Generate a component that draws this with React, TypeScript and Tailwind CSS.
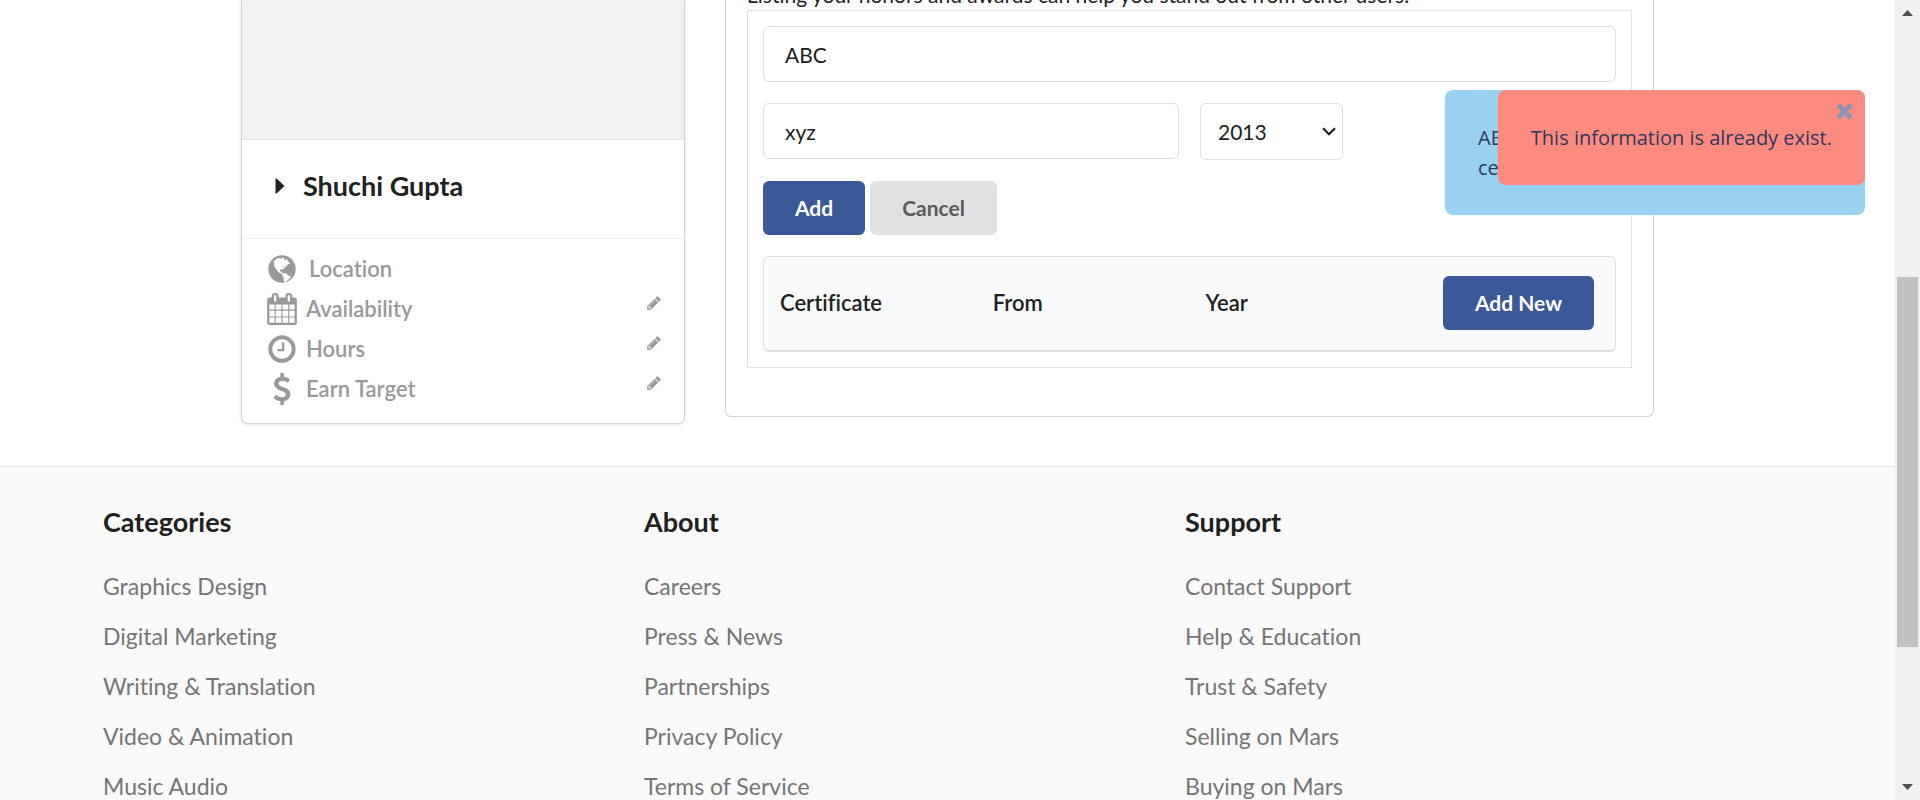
import React from "react";

const PENCIL =
  "M491 1536l91-91-235-235-91 91v107h128v128h107zm523-928q0-22-22-22-10 0-17 7l-542 542q-7 7-7 17 0 22 22 22 10 0 17-7l542-542q7-7 7-17zm-54-192l416 416-832 832h-416v-416zm683 96q0 53-37 90l-166 166-416-416 166-165q36-38 90-38 53 0 91 38l235 234q37 39 37 91z";
const CALENDAR =
  "M192 1664h288v-288h-288v288zm352 0h320v-288h-320v288zm-352-352h288v-320h-288v320zm352 0h320v-320h-320v320zm-352-384h288v-288h-288v288zm736 736h320v-288h-320v288zm-384-736h320v-288h-320v288zm768 736h288v-288h-288v288zm-384-352h320v-320h-320v320zm-352-864v-288q0-13-9.5-22.5t-22.5-9.5h-64q-13 0-22.5 9.5t-9.5 22.5v288q0 13 9.5 22.5t22.5 9.5h64q13 0 22.5-9.5t9.5-22.5zm736 864h288v-320h-288v320zm-384-384h320v-288h-320v288zm384 0h288v-288h-288v288zm32-480v-288q0-13-9.5-22.5t-22.5-9.5h-64q-13 0-22.5 9.5t-9.5 22.5v288q0 13 9.5 22.5t22.5 9.5h64q13 0 22.5-9.5t9.5-22.5zm384-64v1280q0 52-38 90t-90 38h-1408q-52 0-90-38t-38-90v-1280q0-52 38-90t90-38h128v-96q0-66 47-113t113-47h64q66 0 113 47t47 113v96h384v-96q0-66 47-113t113-47h64q66 0 113 47t47 113v96h128q52 0 90 38t38 90z";
const CLOCK =
  "M1024 544v448q0 14-9 23t-23 9h-320q-14 0-23-9t-9-23v-64q0-14 9-23t23-9h224v-352q0-14 9-23t23-9h64q14 0 23 9t9 23zm416 352q0-148-73-273t-198-198-273-73-273 73-198 198-73 273 73 273 198 198 273 73 273-73 198-198 73-273zm224 0q0 209-103 385.5t-279.5 279.5-385.5 103-385.5-103-279.5-279.5-103-385.5 103-385.5 279.5-279.5 385.5-103 385.5 103 279.5 279.5 103 385.5z";
const DOLLAR =
  "M1362 1185q0 153-99.5 263.5t-258.5 136.5v175q0 14-9 23t-23 9h-135q-13 0-22.5-9.5t-9.5-22.5v-175q-66-9-127.5-31t-101.5-44.5-74-48-46.5-37.5-17.5-18q-17-21-2-41l103-135q7-10 23-12 15-2 24 9l2 2q113 99 243 125 37 8 74 8 81 0 142.5-43t61.5-122q0-28-15-53t-33.5-42-58.5-37.5-66-32-80-32.5q-39-16-61.5-25t-61.5-26.5-62.5-31-56.5-35.5-53.5-42.5-43.5-49-35.5-58-21-66.5-8.5-78q0-138 98-242t255-134v-180q0-13 9.5-22.5t22.5-9.5h135q14 0 23 9t9 23v176q57 6 110.5 23t87 33.5 63.5 37.5 39 29 15 14q17 18 5 38l-81 146q-8 15-23 16-14 3-27-7-3-3-14.5-12t-39-26.5-58.5-32-74.5-26-85.5-11.5q-95 0-155 43t-60 111q0 26 8.5 48t29.5 41.5 39.5 33 56 31 60.5 27 70 27.5q53 20 81 31.5t76 35 75.5 42.5 62 50 53 63.5 31.5 76.5 13 94z";

function Glyph({ d, className }: { d: string; className: string }) {
  return (
    <svg viewBox="0 0 1792 1792" fill="currentColor" className={className} aria-hidden="true">
      <path d={d} />
    </svg>
  );
}

function Globe() {
  return (
    <svg viewBox="0 0 32 32" className="size-8" aria-hidden="true">
      <circle cx="16" cy="16" r="13.700" fill="currentColor" />
      <path
        fill="#fff"
        d="M7.500 8.700 10.500 5.800l2.800-1 1.600 1 1.900-1.200 1.600.6-1 1.300 1.900.4 1.100-1 1.200 1.600 1.600 2.100 1.200.8-2.400.8-1.300 1.800-2.200 1.400-1.200 2-1.500-.4-1.800 1 .2 1.700 1.600-.4.2 1.500 1.700.9-.4 1.200-2.400-1.300-2.600-1.600-2.300-2.800-1.900-3.200-.2-3.200z"
      />
      <path
        fill="#fff"
        d="m16.900 20.600 2.200-.5 2 .9 1.100 1.400 2.700.8-.8 2.200-1.900 1.100-1.600 1.800-2 .9-.9-1.800-.2-2.600-1.300-1.700z"
      />
    </svg>
  );
}

const details = [
  { label: "Availability", d: CALENDAR },
  { label: "Hours", d: CLOCK },
  { label: "Earn Target", d: DOLLAR },
];

const footer = [
  {
    title: "Categories",
    links: ["Graphics Design", "Digital Marketing", "Writing & Translation", "Video & Animation", "Music Audio"],
  },
  { title: "About", links: ["Careers", "Press & News", "Partnerships", "Privacy Policy", "Terms of Service"] },
  {
    title: "Support",
    links: ["Contact Support", "Help & Education", "Trust & Safety", "Selling on Mars", "Buying on Mars"],
  },
];

function ProfileCard() {
  return (
    <aside className="w-[442px] shrink-0 overflow-hidden rounded-b-md bg-white shadow-[0_0_0_1px_#d4d4d5,0_1px_4px_0_#d4d4d5]">
      <div className="h-[140px] border-b border-[#e6e6e6] bg-[#f1f1f1]" />
      <div className="flex h-[98px] items-center pb-1.5 pl-[33px]">
        <svg viewBox="0 0 10 16" className="mr-[18px] h-4 w-[10px]" fill="#212121" aria-hidden="true">
          <path d="M0.500 0.500h1l8 7.500-8 7.500h-1z" />
        </svg>
        <h2 className="text-[27px] leading-8 font-bold">Shuchi Gupta</h2>
      </div>
      <ul className="border-t border-[#f0f0f0] pt-[10px] pr-[22px] pb-[14px] pl-6 text-[22px] font-semibold text-[#999]">
        <li className="flex h-10 items-center">
          <Globe />
          <span className="ml-[11px] pb-0.5">Location</span>
        </li>
        {details.map((item) => (
          <li key={item.label} className="flex h-10 items-center">
            <Glyph d={item.d} className="size-8" />
            <span className="ml-2 pb-0.5">{item.label}</span>
            <button type="button" aria-label={`Edit ${item.label}`} className="ml-auto pb-3">
              <Glyph d={PENCIL} className="size-4" />
            </button>
          </li>
        ))}
      </ul>
    </aside>
  );
}

function Certifications() {
  const field = "rounded-md border border-[#dededf] bg-white text-[21px] text-[#212121] outline-none";
  const primary = "h-[54px] rounded-md bg-[#3b5998] px-8 text-[21px] font-bold text-white";
  return (
    <section className="flex-1 rounded-b-md border border-t-0 border-[#d4d4d5] px-[21px] pb-12">
      <p className="-mt-5 text-[21px] leading-[30px]">
        Listing your honors and awards can help you stand out from other users.
      </p>
      <form className="border border-[#e2e2e3] p-[15px]" onSubmit={(e) => e.preventDefault()}>
        <input aria-label="Certificate or award" defaultValue="ABC" className={`${field} h-14 w-full px-[21px]`} />
        <div className="mt-[21px] flex gap-[21px]">
          <input aria-label="Certified from" defaultValue="xyz" className={`${field} h-14 w-[416px] px-[21px]`} />
          <div className="relative">
            <select aria-label="Year" defaultValue="2013" className={`${field} h-[57px] w-[143px] appearance-none px-[17px]`}>
              <option>2013</option>
              <option>2014</option>
              <option>2015</option>
            </select>
            <svg
              viewBox="0 0 14 9"
              className="pointer-events-none absolute top-6 right-[7px] h-[9px] w-[14px]"
              fill="none"
              stroke="#212121"
              strokeWidth="2.200"
              aria-hidden="true"
            >
              <path d="M1 1.200l6 6 6-6" />
            </svg>
          </div>
        </div>
        <div className="mt-[21px] flex gap-[5px]">
          <button type="submit" className={primary}>
            Add
          </button>
          <button type="button" className="h-[54px] rounded-md bg-[#e0e1e2] px-8 text-[21px] font-bold text-[#5a5a5a]">
            Cancel
          </button>
        </div>
        <div className="mt-[21px] rounded-md border border-b-2 border-[#dededf] bg-[#f9fafb]">
          <table className="w-full table-fixed text-left text-[22px]">
            <thead>
              <tr className="h-[93px]">
                <th className="w-1/4 pb-0.5 pl-4 font-semibold">Certificate</th>
                <th className="w-1/4 pb-0.5 pl-4 font-semibold">From</th>
                <th className="w-1/4 pb-0.5 pl-4 font-semibold">Year</th>
                <th className="w-1/4 pr-[21px] pb-0.5 text-right">
                  <button type="button" className={`${primary} align-middle`}>
                    Add New
                  </button>
                </th>
              </tr>
            </thead>
          </table>
        </div>
      </form>
    </section>
  );
}

function Toasts() {
  return (
    <div className="absolute top-[90px] right-[55px] grid w-[420px] font-['Open_Sans','Noto_Sans',sans-serif] text-[20px] leading-[30px] text-[#2e3a5c]">
      <div className="col-start-1 row-start-1 rounded-lg bg-[#99d2f0] px-[33px] pt-[33px] pb-8">
        <p>
          ABC has been added to your
          <br />
          certification
        </p>
      </div>
      <div
        role="alert"
        className="relative col-start-1 row-start-1 self-start justify-self-end rounded-lg bg-[#ff8a80] px-[33px] pt-[33px] pb-8 whitespace-nowrap"
      >
        This information is already exist.
        <button type="button" aria-label="Close" className="absolute top-[13px] right-[12px] text-[#8d94ad]">
          <svg viewBox="0 0 17 17" className="size-[17px]" fill="none" stroke="currentColor" strokeWidth="5" aria-hidden="true">
            <path d="M2 2l13 13M15 2L2 15" />
          </svg>
        </button>
      </div>
    </div>
  );
}

function Scrollbar() {
  return (
    <div className="flex w-[25px] shrink-0 flex-col items-center bg-[#f0f0f0]" aria-hidden="true">
      <svg viewBox="0 0 25 26" className="h-[26px] w-[25px]" fill="#505050">
        <path d="M7 16l5.500-6 5.500 6z" />
      </svg>
      <div className="flex w-[21px] flex-1 flex-col">
        <div className="grow-[251]" />
        <div className="grow-[370] bg-[#c1c1c1]" />
        <div className="grow-[127]" />
      </div>
      <svg viewBox="0 0 25 26" className="h-[26px] w-[25px]" fill="#505050">
        <path d="M7 10l5.500 6 5.500-6z" />
      </svg>
    </div>
  );
}

export default function App() {
  return (
    <div className="relative flex h-screen overflow-hidden bg-white font-[Lato,sans-serif] text-[#212121] [font-variant-ligatures:none]">
      <div className="min-w-0 flex-1">
        <main className="mr-[241px] ml-[242px] flex items-start gap-[41px]">
          <ProfileCard />
          <Certifications />
        </main>
        <footer className="mt-[43px] min-h-[400px] border-t border-[#e2e3e3] bg-[#fafafa] pt-[39px] pl-[103px]">
          <div className="grid grid-cols-[repeat(3,541px)]">
            {footer.map((col) => (
              <nav key={col.title} aria-label={col.title}>
                <h3 className="text-[27px] leading-8 font-bold">{col.title}</h3>
                <ul className="mt-[23px] text-[23px] leading-[50px] text-[#757575]">
                  {col.links.map((l) => (
                    <li key={l}>
                      <a href="#">{l}</a>
                    </li>
                  ))}
                </ul>
              </nav>
            ))}
          </div>
        </footer>
      </div>
      <Scrollbar />
      <Toasts />
    </div>
  );
}
